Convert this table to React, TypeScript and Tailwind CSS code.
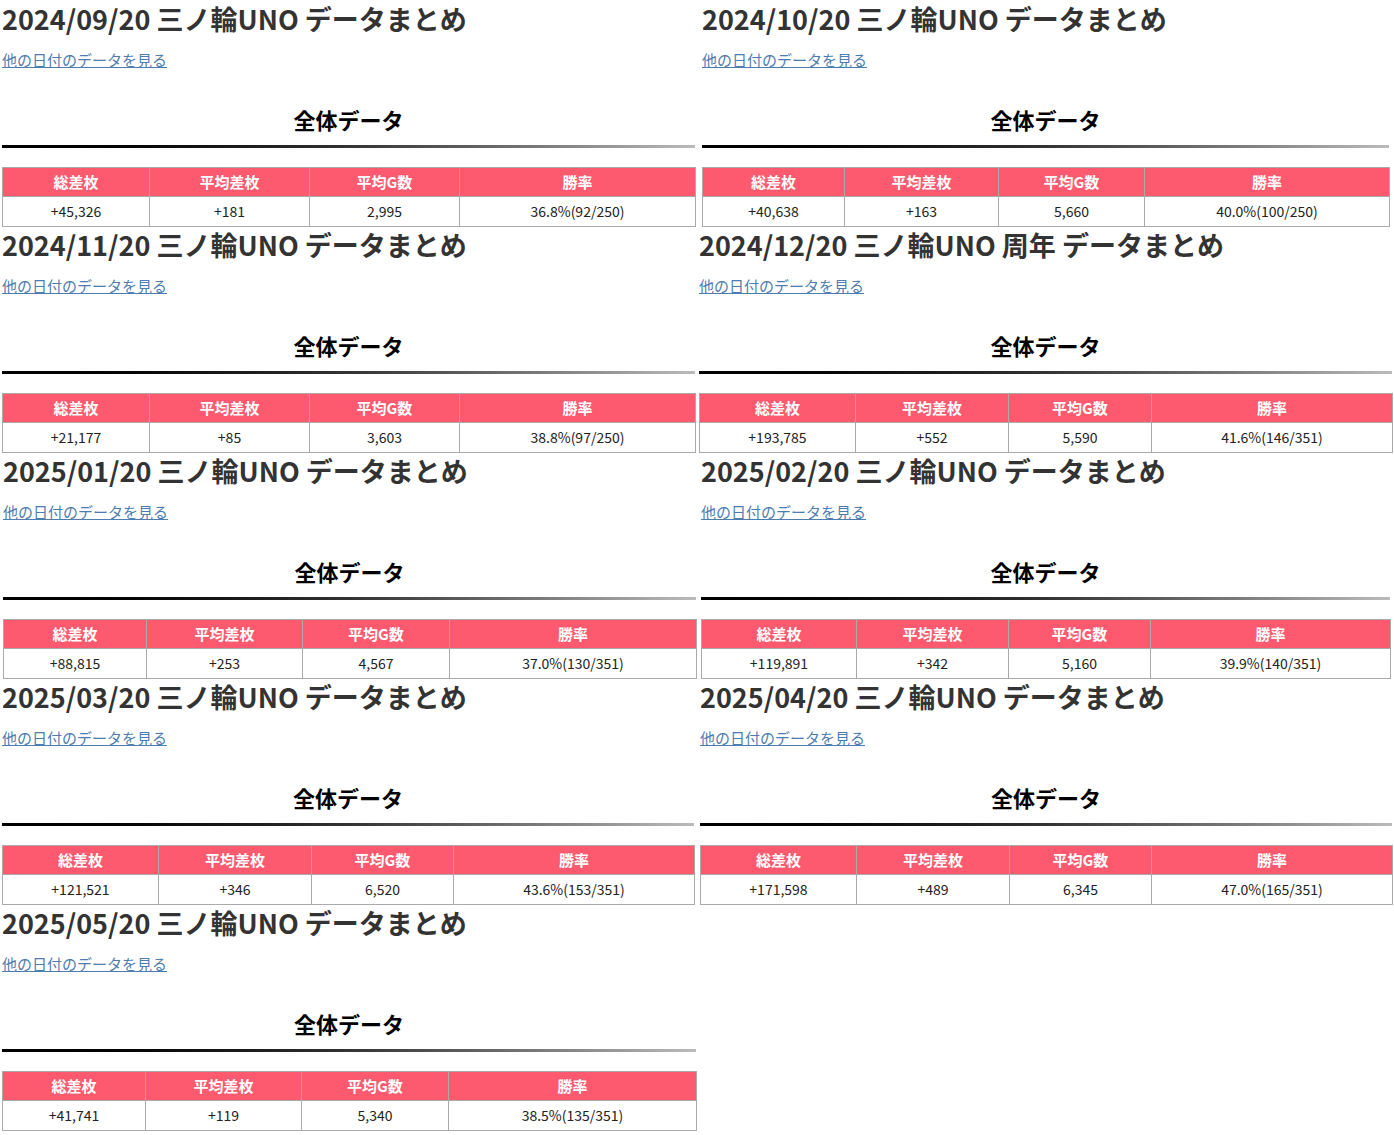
const cards = [
  { title: "2024/09/20 三ノ輪UNO データまとめ", cols: [147, 160, 150, 236], ml: 2, vals: ["+45,326", "+181", "2,995", "36.8%(92/250)"] },
  { title: "2024/10/20 三ノ輪UNO データまとめ", cols: [142, 154, 146, 245], ml: 4, vals: ["+40,638", "+163", "5,660", "40.0%(100/250)"] },
  { title: "2024/11/20 三ノ輪UNO データまとめ", cols: [147, 160, 150, 236], ml: 2, vals: ["+21,177", "+85", "3,603", "38.8%(97/250)"] },
  { title: "2024/12/20 三ノ輪UNO 周年 データまとめ", cols: [156, 153, 143, 241], ml: 1, vals: ["+193,785", "+552", "5,590", "41.6%(146/351)"] },
  { title: "2025/01/20 三ノ輪UNO データまとめ", cols: [143, 156, 147, 247], ml: 3, vals: ["+88,815", "+253", "4,567", "37.0%(130/351)"] },
  { title: "2025/02/20 三ノ輪UNO データまとめ", cols: [155, 152, 142, 240], ml: 3, vals: ["+119,891", "+342", "5,160", "39.9%(140/351)"] },
  { title: "2025/03/20 三ノ輪UNO データまとめ", cols: [156, 153, 142, 241], ml: 2, vals: ["+121,521", "+346", "6,520", "43.6%(153/351)"] },
  { title: "2025/04/20 三ノ輪UNO データまとめ", cols: [156, 153, 142, 241], ml: 2, vals: ["+171,598", "+489", "6,345", "47.0%(165/351)"] },
  { title: "2025/05/20 三ノ輪UNO データまとめ", cols: [143, 156, 147, 248], ml: 2, vals: ["+41,741", "+119", "5,340", "38.5%(135/351)"] },
];

const heads = ["総差枚", "平均差枚", "平均G数", "勝率"];

function Card({ card }: { card: (typeof cards)[number] }) {
  const width = card.cols.reduce((a, b) => a + b, 0);
  return (
    <div className="h-[226px] flex flex-col" style={{ marginLeft: card.ml, width }}>
      <h1 className="text-[27px] leading-[36px] font-bold text-[#333] whitespace-nowrap">{card.title}</h1>
      <a href="#" className="mt-[13px] text-[15px] leading-[20px] text-[#4d7db0] underline self-start">
        他の日付のデータを見る
      </a>
      <h2 className="mt-[34px] text-[22px] leading-[30px] font-bold text-black text-center">全体データ</h2>
      <div className="mt-[11px] h-[3px] bg-gradient-to-r from-black via-[#333] to-[#bbb]" />
      <table className="mt-[19px] table-fixed border-collapse border border-[#aaa]" style={{ width }}>
        <colgroup>
          {card.cols.map((w, i) => (
            <col key={i} style={{ width: w }} />
          ))}
        </colgroup>
        <thead>
          <tr className="h-[29px] bg-[#fe5a6f]">
            {heads.map((h) => (
              <th key={h} className="border border-[#aaa] text-[15px] font-bold text-white text-center">
                {h}
              </th>
            ))}
          </tr>
        </thead>
        <tbody>
          <tr className="h-[30px] bg-white">
            {card.vals.map((v, i) => (
              <td key={i} className="border border-[#aaa] text-[14px] text-[#222] text-center">
                {v}
              </td>
            ))}
          </tr>
        </tbody>
      </table>
    </div>
  );
}

export default function App() {
  return (
    <div className="w-[1394px] min-h-[1135px] bg-white pt-px font-['Noto_Sans_CJK_JP','Noto_Sans',sans-serif]">
      <div className="grid grid-cols-[698px_696px]">
        {cards.map((c) => (
          <Card key={c.title} card={c} />
        ))}
      </div>
    </div>
  );
}
